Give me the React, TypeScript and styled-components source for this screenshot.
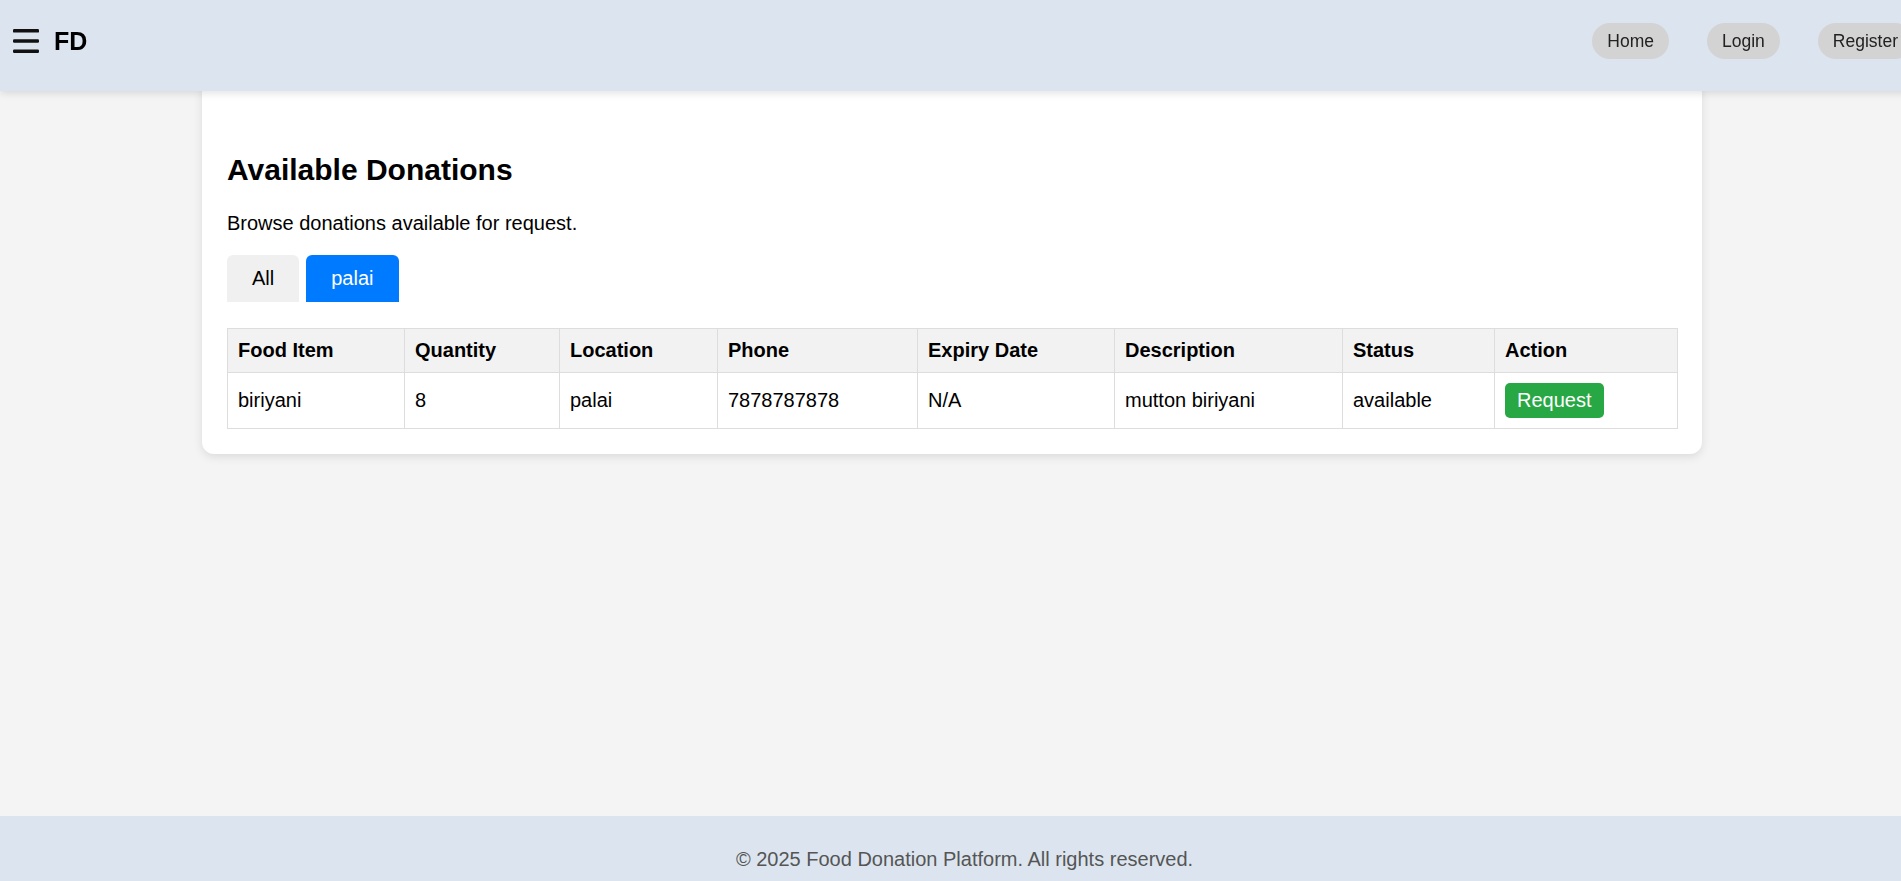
import React from "react";
import styled, { createGlobalStyle } from "styled-components";

const GlobalStyle = createGlobalStyle`
  html, body {
    margin: 0;
    padding: 0;
  }
  body {
    background: #f4f4f4;
    font-family: "Liberation Sans", Arial, sans-serif;
    color: #000;
    overflow-x: hidden;
  }
  * { box-sizing: border-box; }
`;

const Page = styled.div`
  min-height: 100vh;
  display: flex;
  flex-direction: column;
`;

const Header = styled.header`
  position: sticky;
  top: 0;
  z-index: 10;
  height: 91px;
  margin-right: -12px;
  padding: 0 0 9px 13px;
  background: #dce5ef;
  box-shadow: 0 2px 8px rgba(0, 0, 0, 0.12);
  display: flex;
  align-items: center;
  justify-content: space-between;
`;

const Brand = styled.div`
  display: flex;
  align-items: center;
  gap: 15px;
`;

const MenuIcon = styled.svg`
  display: block;
  width: 26px;
  height: 24px;
`;

const Logo = styled.span`
  font-size: 25px;
  font-weight: 700;
  line-height: 29px;
`;

const Nav = styled.nav`
  display: flex;
  align-items: center;
  gap: 38px;
`;

const NavPill = styled.a`
  display: inline-flex;
  align-items: center;
  height: 36px;
  padding: 0 15px;
  border-radius: 18px;
  background: #d3d3d3;
  color: #222;
  font-size: 17.5px;
  text-decoration: none;
  white-space: nowrap;
`;

const Main = styled.main`
  flex: 1;
  display: flex;
  justify-content: center;
  align-items: flex-start;
  padding-left: 3px;
`;

const Card = styled.section`
  width: 1500px;
  margin-top: -12px;
  padding: 74px 25px 25px;
  background: #fff;
  border-radius: 12px;
  box-shadow: 0 3px 10px rgba(0, 0, 0, 0.1);
`;

const Title = styled.h2`
  margin: 0 0 24px;
  font-size: 30px;
  line-height: 34.5px;
  font-weight: 700;
`;

const Lead = styled.p`
  margin: 0 0 20px;
  font-size: 20px;
  line-height: 23px;
`;

const Tabs = styled.div`
  display: flex;
  gap: 7px;
  margin-bottom: 26px;
`;

const Tab = styled.button<{ $active?: boolean }>`
  height: 47px;
  padding: 0 25px;
  border: none;
  border-radius: 6px 6px 0 0;
  background: ${(p) => (p.$active ? "#007bff" : "#f0f0f0")};
  color: ${(p) => (p.$active ? "#fff" : "#000")};
  font-family: inherit;
  font-size: 20px;
  line-height: 23px;
  cursor: pointer;
`;

const Table = styled.table`
  width: 100%;
  border-collapse: collapse;
  table-layout: fixed;
  font-size: 20px;
`;

const Col = styled.col``;

const Th = styled.th`
  border: 1px solid #ddd;
  padding: 10px;
  line-height: 23px;
  text-align: left;
  font-weight: 700;
  background: #f2f2f2;
`;

const Td = styled.td`
  border: 1px solid #ddd;
  padding: 10px;
  line-height: 23px;
  text-align: left;
  vertical-align: middle;
`;

const RequestButton = styled.button`
  display: block;
  padding: 6px 12px;
  border: none;
  border-radius: 5px;
  background: #28a745;
  color: #fff;
  font-family: inherit;
  font-size: 20px;
  line-height: 23px;
  cursor: pointer;
`;

const Footer = styled.footer`
  height: 65px;
  padding-top: 32px;
  padding-left: 28px;
  overflow: hidden;
  background: #dce5ef;
  text-align: center;
  color: #555;
  font-size: 20px;
  line-height: 23px;
`;

const columns = [
  { label: "Food Item", width: 177 },
  { label: "Quantity", width: 155 },
  { label: "Location", width: 158 },
  { label: "Phone", width: 200 },
  { label: "Expiry Date", width: 197 },
  { label: "Description", width: 228 },
  { label: "Status", width: 152 },
  { label: "Action", width: 183 },
];

const donations = [
  {
    food: "biriyani",
    quantity: "8",
    location: "palai",
    phone: "7878787878",
    expiry: "N/A",
    description: "mutton biriyani",
    status: "available",
  },
];

export default function App() {
  return (
    <Page>
      <GlobalStyle />
      <Header>
        <Brand>
          <MenuIcon viewBox="0 0 26 24" aria-hidden="true">
            <rect x="0" y="0" width="26" height="3.6" rx="1.2" fill="#111" />
            <rect x="0" y="10.2" width="26" height="3.6" rx="1.2" fill="#111" />
            <rect x="0" y="20.4" width="26" height="3.6" rx="1.2" fill="#111" />
          </MenuIcon>
          <Logo>FD</Logo>
        </Brand>
        <Nav>
          <NavPill href="#">Home</NavPill>
          <NavPill href="#">Login</NavPill>
          <NavPill href="#">Register</NavPill>
        </Nav>
      </Header>
      <Main>
        <Card>
          <Title>Available Donations</Title>
          <Lead>Browse donations available for request.</Lead>
          <Tabs>
            <Tab>All</Tab>
            <Tab $active>palai</Tab>
          </Tabs>
          <Table>
            <colgroup>
              {columns.map((c) => (
                <Col key={c.label} style={{ width: c.width }} />
              ))}
            </colgroup>
            <thead>
              <tr>
                {columns.map((c) => (
                  <Th key={c.label}>{c.label}</Th>
                ))}
              </tr>
            </thead>
            <tbody>
              {donations.map((d) => (
                <tr key={d.phone}>
                  <Td>{d.food}</Td>
                  <Td>{d.quantity}</Td>
                  <Td>{d.location}</Td>
                  <Td>{d.phone}</Td>
                  <Td>{d.expiry}</Td>
                  <Td>{d.description}</Td>
                  <Td>{d.status}</Td>
                  <Td>
                    <RequestButton>Request</RequestButton>
                  </Td>
                </tr>
              ))}
            </tbody>
          </Table>
        </Card>
      </Main>
      <Footer>© 2025 Food Donation Platform. All rights reserved.</Footer>
    </Page>
  );
}
